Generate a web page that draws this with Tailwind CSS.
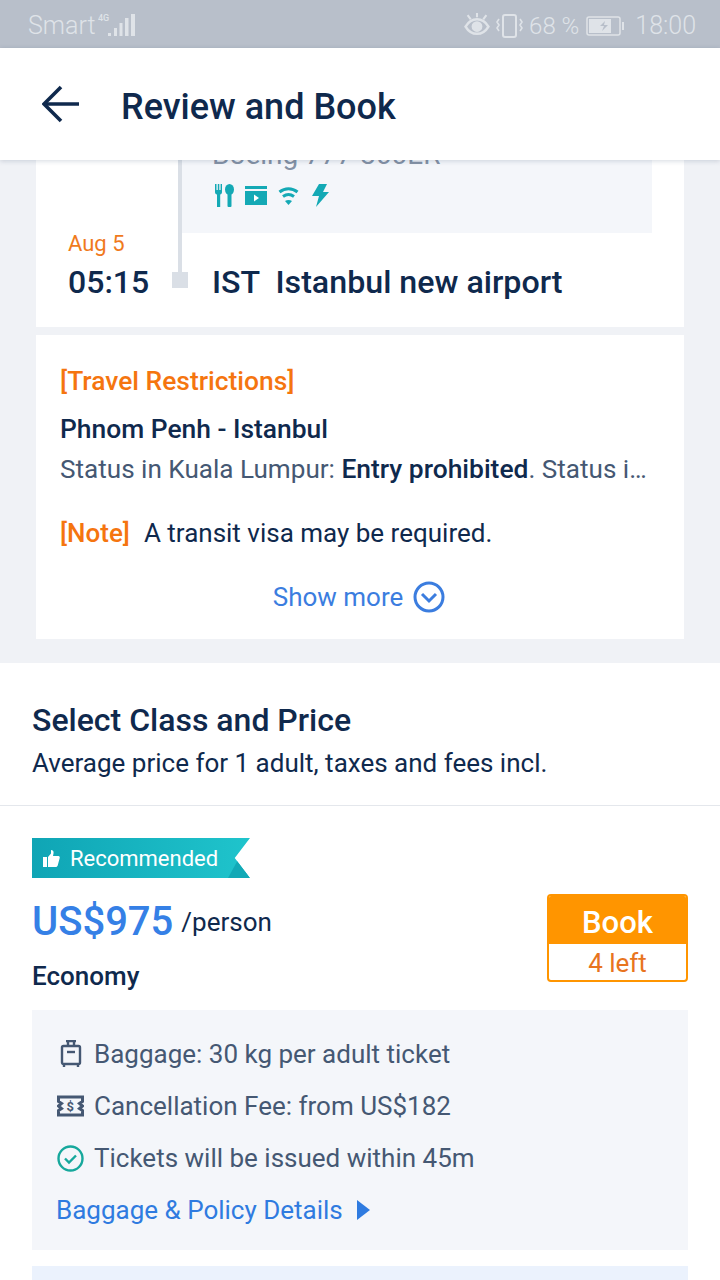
<!DOCTYPE html>
<html lang="en">
<head>
    <meta charset="UTF-8">
    <meta name="viewport" content="width=device-width, initial-scale=1.0">
    <title>Review and Book</title>
    <script src="https://cdn.jsdelivr.net/npm/@tailwindcss/browser@4"></script>
</head>
<body class="w-[720px] h-[1280px] overflow-hidden bg-white font-[family-name:Roboto,sans-serif] text-[#0f294d]">
    <!-- status bar -->
    <div class="h-[48px] bg-[#b8bfca] flex items-center justify-between pl-[28px] pr-[24px] pt-[3px] text-[#dfe3e8] text-[25px]">
        <div class="flex items-center gap-[3px]">
            <span class="font-light">Smart</span>
            <svg width="38" height="26" viewBox="0 0 38 26" fill="#dfe3e8">
                <text x="0" y="8" font-size="9" font-family="Roboto" font-weight="500">4G</text>
                <rect x="10" y="20" width="3" height="3" />
                <rect x="16" y="15" width="3" height="8" />
                <rect x="21.500" y="10" width="3" height="13" />
                <rect x="27" y="5" width="3.500" height="18" />
                <rect x="33" y="1" width="4" height="22" />
            </svg>
        </div>
        <div class="flex items-center">
            <svg width="30" height="25" viewBox="0 0 28 24" fill="none" stroke="#dfe3e8" stroke-width="2.400">
                <path d="M3 13c3-5 7-7 11-7s8 2 11 7c-3 5-7 7-11 7s-8-2-11-7z" />
                <circle cx="14" cy="13" r="4" fill="#dfe3e8" />
                <path d="M5 2l3 4M14 0v4M23 2l-3 4" stroke-width="2" />
            </svg>
            <svg class="ml-[3px]" width="30" height="26" viewBox="0 0 30 26" fill="none" stroke="#dfe3e8" stroke-width="2">
                <rect x="8" y="2" width="13" height="22" rx="2" />
                <path d="M4 6l-2 3 2 3-2 3 2 3M25 6l2 3-2 3 2 3-2 3" stroke-width="1.600" />
            </svg>
            <span class="font-light ml-[4px] text-[24px]">68 %</span>
            <svg class="ml-[7px]" width="40" height="22" viewBox="0 0 40 22" fill="none">
                <rect x="1" y="2" width="33" height="18" rx="2" stroke="#dfe3e8" stroke-width="1.500" />
                <rect x="3" y="4" width="22" height="14" fill="#dfe3e8" />
                <path d="M19 6l-5 5h4l-2 5 6-6h-4z" fill="#b8bfca" />
                <rect x="36" y="7" width="2" height="8" fill="#dfe3e8" />
            </svg>
            <span class="font-light ml-[9px]">18:00</span>
        </div>
    </div>

    <!-- header -->
    <div class="relative z-10 h-[112px] bg-white flex items-center shadow-[0_1px_5px_rgba(15,41,77,0.18)]">
        <svg class="ml-[42px]" width="38" height="38" viewBox="0 0 38 38" fill="none" stroke="#0f294d" stroke-width="3.600">
            <path d="M37 19H3" />
            <path d="M19 2L2 19l17 17" />
        </svg>
        <h1 class="ml-[41px] pt-[5px] text-[36px] font-medium leading-none">Review and Book</h1>
    </div>

    <!-- segment + restrictions -->
    <div class="bg-[#f0f2f6] h-[503px] overflow-hidden">
        <div class="mx-[36px] bg-white h-[167px] overflow-hidden">
            <div class="flex h-[73px]">
                <div class="w-[142px]"></div>
                <div class="w-[4px] bg-[#dadfe6]"></div>
                <div class="w-[470px] bg-[#f4f6fa] pl-[30px]">
                    <div class="-mt-[21px] text-[28px] leading-[32px] text-[#8592a6] whitespace-nowrap">Boeing 777-300ER</div>
                    <div class="mt-[13px] ml-[3px] flex items-center">
                        <svg width="19" height="23" viewBox="0 0 19 23" fill="#14a9b5">
                            <path d="M0 0h1.500v6h1.300V0h1.500v6h1.300V0H7v8c0 1.500-.8 2.300-1.800 2.600V23H2V10.600C.8 10.300 0 9.500 0 8z" />
                            <ellipse cx="14.500" cy="5.500" rx="4.500" ry="5.500" />
                            <rect x="12.500" y="10" width="4" height="13" rx="1" />
                        </svg>
                        <svg class="ml-[11px]" width="22" height="19" viewBox="0 0 22 19" fill="#14a9b5">
                            <rect x="0" y="0" width="22" height="3" />
                            <path d="M0 5h22v14H0z" />
                            <path d="M9 8.500l5 3.500-5 3.500z" fill="#fff" />
                        </svg>
                        <svg class="ml-[11px]" width="21" height="19" viewBox="0 0 21 19" fill="none" stroke="#14a9b5" stroke-width="3">
                            <path d="M1.500 6c5.500-4.500 12.500-4.500 18 0" />
                            <path d="M5 10.500c3.300-2.500 7.700-2.500 11 0" />
                            <path d="M10.500 19l-3.500-4c2-1.300 5-1.300 7 0z" fill="#14a9b5" stroke="none" />
                        </svg>
                        <svg class="ml-[13px]" width="17" height="23" viewBox="0 0 17 23" fill="#14a9b5">
                            <path d="M7 0h8l-4 8h6L4 23l3-11H0z" />
                        </svg>
                    </div>
                </div>
            </div>
            <div class="flex h-[94px]">
                <div class="w-[136px] pl-[32px]">
                    <div class="-mt-[1px] text-[22px] leading-[24px] text-[#f07a1c]">Aug 5</div>
                    <div class="text-[32px] leading-[36px] font-medium mt-[8px]">05:15</div>
                </div>
                <div class="w-[16px] flex flex-col items-center">
                    <div class="w-[4px] h-[39px] bg-[#dadfe6]"></div>
                    <div class="w-[16px] h-[16px] bg-[#dadfe6]"></div>
                </div>
                <div class="ml-[24px] pt-[31px] text-[32.200px] leading-[36px] font-medium whitespace-pre">IST  Istanbul new airport</div>
            </div>
        </div>

        <div class="mx-[36px] mt-[8px] bg-white h-[304px] px-[24px] pt-[30px]">
            <div class="text-[26.400px] leading-[32px] font-medium text-[#f5750f]">[Travel Restrictions]</div>
            <div class="mt-[16px] text-[26.400px] leading-[32px] font-medium">Phnom Penh - Istanbul</div>
            <div class="mt-[8px] text-[26.100px] leading-[32px] text-[#455873] whitespace-nowrap">Status in Kuala Lumpur: <b class="font-medium text-[26.400px] text-[#0f294d]">Entry prohibited</b>. Status i…</div>
            <div class="mt-[32px] text-[26px] leading-[32px] flex">
                <span class="font-medium text-[#f5750f]">[Note]</span>
                <span class="ml-[14px]">A transit visa may be required.</span>
            </div>
            <div class="mt-[32px] mr-[2px] flex items-center justify-center gap-[10px] text-[#3b7ddf] text-[26px] leading-[32px]">
                <span>Show more</span>
                <svg width="32" height="32" viewBox="0 0 32 32" fill="none" stroke="#3b7ddf" stroke-width="3">
                    <circle cx="16" cy="16" r="14" />
                    <path d="M9 13l7 7 7-7" />
                </svg>
            </div>
        </div>
    </div>

    <!-- class and price -->
    <div class="bg-white">
        <div class="h-[143px] border-b border-[#e4e7ec] px-[32px] pt-[39px]">
            <h2 class="text-[32px] leading-[36px] font-medium">Select Class and Price</h2>
            <p class="mt-[9px] text-[26px] leading-[32px]">Average price for 1 adult, taxes and fees incl.</p>
        </div>

        <div class="px-[32px] pt-[32px]">
            <div class="relative w-[218px] h-[40px] bg-gradient-to-r from-[#0fa5b5] to-[#1fc4cc] [clip-path:polygon(0_0,100%_0,93%_50%,100%_100%,0_100%)] flex items-center pl-[11px] text-white text-[22px]">
                <svg width="17" height="17" viewBox="0 0 17 17" fill="#fff">
                    <rect x="0" y="7" width="4" height="10" />
                    <path d="M5 7l3-3.500V0c2 0 3 1.500 2.500 3.500L10 6h5.500c1 0 1.500 1 1.200 2l-2 7.500c-.2.800-1 1.500-2 1.500H5z" />
                </svg>
                <span class="ml-[10px]">Recommended</span>
                <div class="absolute right-0 bottom-0 w-[22px] h-[20px] bg-[#12a9b6] [clip-path:polygon(50%_0,100%_100%,0_100%)]"></div>
            </div>

            <div class="flex justify-between mt-[16px]">
                <div>
                    <div class="flex items-baseline">
                        <span class="text-[40px] leading-[54px] font-medium text-[#3580e6] translate-y-[1px]">US$975</span>
                        <span class="ml-[8px] text-[26px] -translate-y-[3px]">/person</span>
                    </div>
                    <div class="mt-[12px] text-[26px] leading-[32px] font-medium">Economy</div>
                </div>
                <div class="w-[141px] h-[88px] rounded-[4px] border-2 border-[#ff9500] overflow-hidden flex flex-col">
                    <div class="h-[48px] pt-[6px] bg-[#ff9500] text-white text-[31px] font-medium flex items-center justify-center">Book</div>
                    <div class="flex-1 pb-[1px] text-[#e8741e] text-[26px] flex items-center justify-center">4 left</div>
                </div>
            </div>

            <div class="mt-[18px] h-[240px] bg-[#f4f6fa] pl-[24px] pt-[28px] text-[26px] leading-[32px] text-[#455873]">
                <div class="flex items-center h-[32px]">
                    <svg class="ml-[4px] mr-[12px]" width="22" height="28" viewBox="0 0 22 28" fill="none" stroke="#455873" stroke-width="2.400">
                        <path d="M6 1h10M8 1v5M14 1v5" />
                        <rect x="2" y="6" width="18" height="18" rx="1.500" />
                        <path d="M7 12h8" />
                        <path d="M4 24v3M18 24v3" />
                    </svg>
                    <span>Baggage: 30 kg per adult ticket</span>
                </div>
                <div class="flex items-center h-[32px] mt-[20px]">
                    <svg class="ml-[1px] mr-[10px]" width="27" height="22" viewBox="0 0 27 22" fill="none" stroke="#455873" stroke-width="3">
                        <path d="M1.500 2h24v4.500l-3 2 3 2.500-3 2.500 3 2V20h-24v-4.500l3-2-3-2.500 3-2.500-3-2z" />
                        <text x="9.500" y="16" font-size="13" font-family="Roboto" font-weight="700" fill="#455873" stroke="none">$</text>
                    </svg>
                    <span>Cancellation Fee: from US$182</span>
                </div>
                <div class="flex items-center h-[32px] mt-[20px]">
                    <svg class="ml-[1px] mr-[10px]" width="27" height="27" viewBox="0 0 27 27" fill="none" stroke="#16a89c" stroke-width="2.400">
                        <circle cx="13.500" cy="13.500" r="12" />
                        <path d="M8 13.500l4 4 7-7" />
                    </svg>
                    <span>Tickets will be issued within 45m</span>
                </div>
                <div class="flex items-center h-[32px] mt-[20px] text-[#2f7be0]">
                    <span>Baggage &amp; Policy Details</span>
                    <svg class="ml-[14px]" width="13" height="20" viewBox="0 0 13 20" fill="#2f7be0">
                        <path d="M0 0l13 10L0 20z" />
                    </svg>
                </div>
            </div>

            <div class="mt-[16px] h-[20px] bg-[#ebf2fd]"></div>
        </div>
    </div>
</body>
</html>
